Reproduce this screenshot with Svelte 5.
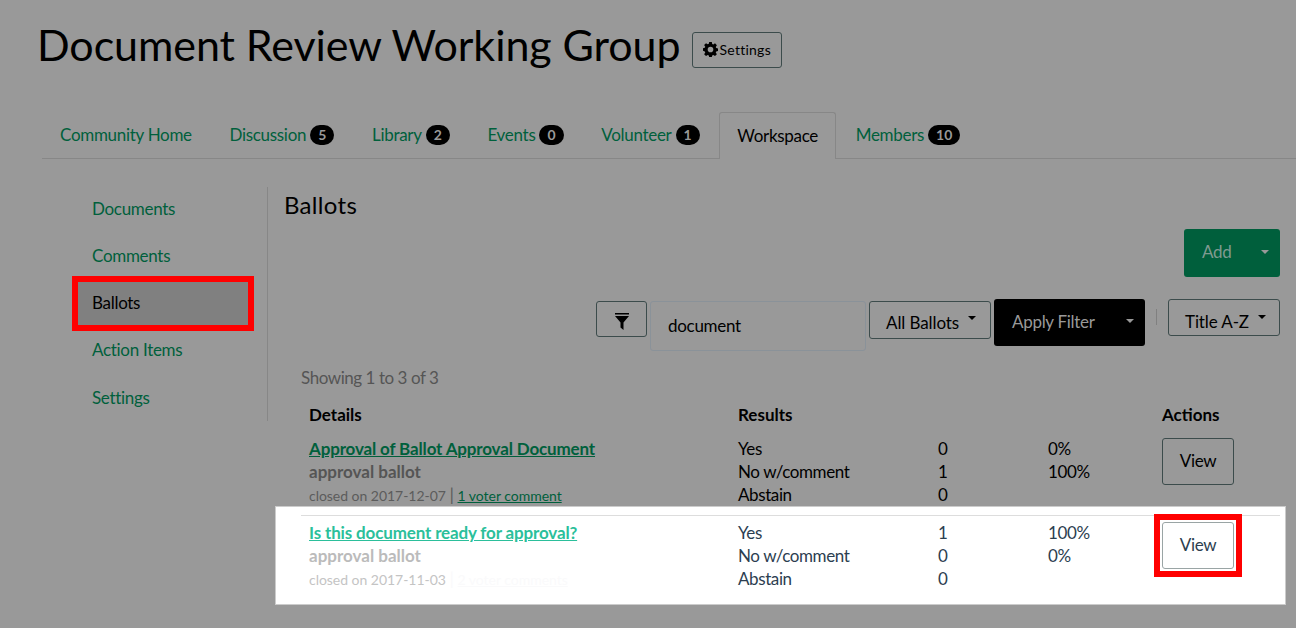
<script>
    const tabs = [
        { name: 'Community Home' },
        { name: 'Discussion', count: 5 },
        { name: 'Library', count: 2 },
        { name: 'Events', count: 0 },
        { name: 'Volunteer', count: 1 },
        { name: 'Workspace', active: true },
        { name: 'Members', count: 10 }
    ]
    const sideItems = ['Documents', 'Comments', 'Ballots', 'Action Items', 'Settings']
</script>

<div class="page">
    <div class="title-row">
        <h1>Document Review Working Group</h1>
        <button class="settings">
            <svg viewBox="0 0 16 16" width="15" height="15"><path fill="#000" fill-rule="evenodd" d="M6.600 0h2.800l.4 2.100 1.200.5 1.800-1.200 2 2-1.200 1.800.5 1.200 1.900.4v2.800l-1.900.4-.5 1.200 1.200 1.800-2 2-1.800-1.200-1.200.5-.4 1.900H6.600l-.4-1.900-1.200-.5-1.800 1.200-2-2 1.200-1.800-.5-1.200L0 9.400V6.600l1.900-.4.500-1.200-1.200-1.800 2-2 1.800 1.200 1.200-.5zM8 5a3 3 0 1 0 0 6 3 3 0 0 0 0-6z"/></svg>
            Settings
        </button>
    </div>

    <nav class="tabs">
        {#each tabs as tab}
            <div class="tab" class:active={tab.active}>
                {tab.name}{#if tab.count !== undefined}<span class="badge">{tab.count}</span>{/if}
            </div>
        {/each}
    </nav>

    <div class="content">
        <aside class="side">
            {#each sideItems as item}
                <div class="side-item" class:current={item === 'Ballots'}>{item}</div>
            {/each}
        </aside>

        <main class="ballots">
            <h2>Ballots</h2>

            <div class="add-row">
                <div class="add-btn"><span>Add</span><i class="caret"></i></div>
            </div>

            <div class="filters">
                <button class="btn funnel">
                    <svg viewBox="0 0 14 17" width="14" height="17"><path fill="#000" d="M0 0h14v1.500H0zM0 3h14L8.500 9.500V17L5.500 14.500V9.500z"/></svg>
                </button>
                <div class="search">document</div>
                <button class="btn all">All Ballots<i class="caret dark"></i></button>
                <div class="apply"><span>Apply Filter</span><i class="caret"></i></div>
                <div class="sep"></div>
                <button class="btn sort">Title A-Z<i class="caret dark"></i></button>
            </div>

            <div class="showing">Showing 1 to 3 of 3</div>

            <div class="row head">
                <div>Details</div>
                <div>Results</div>
                <div></div>
                <div>Actions</div>
            </div>

            <div class="row first">
                <div class="details">
                    <a href="#a" class="name">Approval of Ballot Approval Document</a>
                    <div class="kind">approval ballot</div>
                    <div class="meta">closed on 2017-12-07 <span class="bar">|</span> <a href="#b">1 voter comment</a></div>
                </div>
                <div class="results">
                    <div>Yes</div><div>0</div><div>0%</div>
                    <div>No w/comment</div><div>1</div><div>100%</div>
                    <div>Abstain</div><div>0</div><div></div>
                </div>
                <div class="action"><button class="view">View</button></div>
            </div>

            <div class="highlight">
                <div class="row lit">
                    <div class="details">
                        <a href="#c" class="name">Is this document ready for approval?</a>
                        <div class="kind">approval ballot</div>
                        <div class="meta">closed on 2017-11-03 <span class="ghost"><span class="bar">|</span> <u>2 voter comments</u></span></div>
                    </div>
                    <div class="results">
                        <div>Yes</div><div>1</div><div>100%</div>
                        <div>No w/comment</div><div>0</div><div>0%</div>
                        <div>Abstain</div><div>0</div><div></div>
                    </div>
                    <div class="action"><div class="ring"><button class="view">View</button></div></div>
                </div>
            </div>
        </main>
    </div>
</div>

<style>
    :global(body) {
        margin: 0;
        background: #999999;
    }

    .page {
        height: 628px;
        overflow: hidden;
        font-family: Lato, sans-serif;
        font-size: 17px;
        letter-spacing: -0.3px;
        color: #000;
        background: #999999;
    }

    button {
        font-family: inherit;
        cursor: pointer;
    }

    .title-row {
        display: flex;
        align-items: center;
        gap: 11px;
        padding: 18px 0 0 37px;
        height: 56px;
    }

    h1 {
        margin: -2px 0 0;
        font-size: 43px;
        font-weight: 400;
        line-height: 56px;
        letter-spacing: -0.07px;
    }

    .settings {
        display: flex;
        align-items: center;
        gap: 2px;
        width: 90px;
        height: 36px;
        margin-top: 7px;
        padding: 0 0 0 10px;
        border: 1px solid #3c4c4c;
        border-radius: 3px;
        background: transparent;
        font-size: 14px;
        letter-spacing: 0.25px;
        color: #000;
    }

    .tabs {
        display: flex;
        gap: 1.700px;
        margin: 38px 0 0 42px;
        height: 46px;
        border-bottom: 1px solid #878787;
    }

    .tab {
        display: flex;
        align-items: center;
        padding: 0 18px 2px;
        height: 46px;
        box-sizing: border-box;
        color: #00603c;
    }

    .tab.active {
        color: #000;
        height: 47px;
        border: 1px solid #878787;
        border-bottom: 0;
        border-radius: 3px 3px 0 0;
        background: #999999;
        padding: 0 17px 2px;
    }

    .badge {
        display: inline-block;
        margin: 2px 0 0 4px;
        padding: 0 8px;
        height: 20px;
        line-height: 20px;
        border-radius: 10px;
        background: #000;
        color: #999;
        font-size: 14px;
        font-weight: 700;
        letter-spacing: 0;
    }

    .content {
        display: flex;
    }

    .side {
        box-sizing: border-box;
        width: 226px;
        height: 234px;
        margin: 28px 0 0 42px;
        border-right: 1px solid #878787;
    }

    .side-item {
        box-sizing: border-box;
        height: 47.200px;
        line-height: 47px;
        padding-left: 50px;
        color: #00603c;
    }

    .side-item:first-child {
        margin-top: -2px;
    }

    .side-item.current {
        margin: -3px 13px -5px 30px;
        padding-left: 14px;
        height: 55px;
        line-height: 41px;
        background: #808080;
        color: #000;
        border: 6px solid #ff0000;
    }

    .ballots {
        position: relative;
        flex: 1;
        padding: 0 16px 0 17px;
        margin-top: 26px;
    }

    h2 {
        margin: 0 0 0 -1px;
        font-size: 24px;
        font-weight: 400;
        line-height: 40px;
        letter-spacing: 0.3px;
    }

    .add-row {
        display: flex;
        justify-content: flex-end;
        margin-top: 4px;
    }

    .add-btn {
        display: flex;
        align-items: center;
        justify-content: space-between;
        box-sizing: border-box;
        width: 96px;
        height: 48px;
        padding: 0 11px 3px 18px;
        background: #005f3c;
        border-radius: 3px;
        color: #7f9a90;
    }

    .caret {
        display: inline-block;
        width: 0;
        height: 0;
        border-left: 4px solid transparent;
        border-right: 4px solid transparent;
        border-top: 4px solid #999;
    }

    .caret.dark {
        border-top-color: #000;
        margin: 0 0 8px 9px;
    }

    .filters {
        display: flex;
        align-items: flex-start;
        justify-content: flex-end;
        margin-top: 22px;
    }

    .btn {
        display: flex;
        align-items: center;
        box-sizing: border-box;
        border: 1px solid #3c4c4c;
        border-radius: 3px;
        background: transparent;
        font-size: 17px;
        letter-spacing: -0.1px;
        color: #000;
        padding: 0 0 0 16px;
    }

    .funnel {
        justify-content: center;
        padding: 5px 0 0;
        width: 51px;
        height: 36px;
        margin-top: 2px;
    }

    .search {
        box-sizing: border-box;
        width: 216px;
        height: 50px;
        margin: 2px 3px 0 3px;
        padding: 0 17px;
        line-height: 48px;
        border: 1px solid #8a9299;
        border-radius: 3px;
    }

    .all {
        width: 122px;
        height: 38px;
        margin-top: 2px;
        margin-right: 3px;
        padding-top: 4px;
    }

    .apply {
        display: flex;
        align-items: center;
        justify-content: space-between;
        box-sizing: border-box;
        width: 151px;
        height: 47px;
        padding: 0 11px 3px 18px;
        background: #000;
        border-radius: 3px;
        color: #999;
    }

    .sep {
        width: 1px;
        height: 16px;
        margin: 10px 11px 0;
        background: #808080;
    }

    .sort {
        width: 112px;
        height: 37px;
        padding-top: 7px;
    }

    .showing {
        margin-top: 14px;
        padding-left: 16px;
        line-height: 26px;
        letter-spacing: -0.45px;
        color: #555;
    }

    .row {
        display: grid;
        grid-template-columns: 429px 424px 1fr;
        padding-left: 24px;
        line-height: 23px;
    }

    .row.head {
        grid-template-columns: 429px 310px 114px 1fr;
        margin-top: 12px;
        font-weight: 700;
        letter-spacing: 0;
        line-height: 24px;
    }

    .row.first {
        margin-top: 11px;
    }

    .details,
    .results {
        margin: -1px 0 1px;
    }

    .details a {
        color: #00603c;
    }

    .name {
        font-weight: 700;
        letter-spacing: -0.15px;
    }

    .kind {
        font-weight: 700;
        letter-spacing: 0;
        color: #555;
    }

    .meta {
        height: 23px;
        line-height: 25px;
        font-size: 14px;
        letter-spacing: -0.03px;
        color: #5c5c5c;
    }

    .bar {
        font-size: 18px;
        line-height: 18px;
    }

    .results {
        display: grid;
        grid-template-columns: 200px 110px 1fr;
        letter-spacing: -0.4px;
    }

    .view {
        display: block;
        box-sizing: border-box;
        width: 72px;
        height: 47px;
        padding: 0 0 2px;
        border: 1px solid #3c4c4c;
        border-radius: 3px;
        background: transparent;
        font-size: 17px;
        letter-spacing: -0.3px;
        color: #000;
    }

    .highlight {
        margin: 0 -5px 0 -9px;
        padding: 8px 5px 13px 25px;
        background: #fff;
        box-shadow: 0 0 0 1px #cccccc;
    }

    .lit {
        padding-top: 6px;
        padding-left: 8px;
        border-top: 1px solid #dddddd;
        color: #2c3e50;
    }

    .lit .details a {
        color: #2bbf9b;
    }

    .lit .kind {
        color: #bbbbbb;
    }

    .lit .meta {
        color: #c4c4c4;
    }

    .ghost {
        color: #fafafb;
    }

    .ring {
        width: fit-content;
        margin: -8px 0 0 -8px;
        padding: 2px;
        border: 6px solid #ff0000;
    }

    .lit .view {
        color: #2c3e50;
        border-color: #9aa5a5;
    }
</style>
